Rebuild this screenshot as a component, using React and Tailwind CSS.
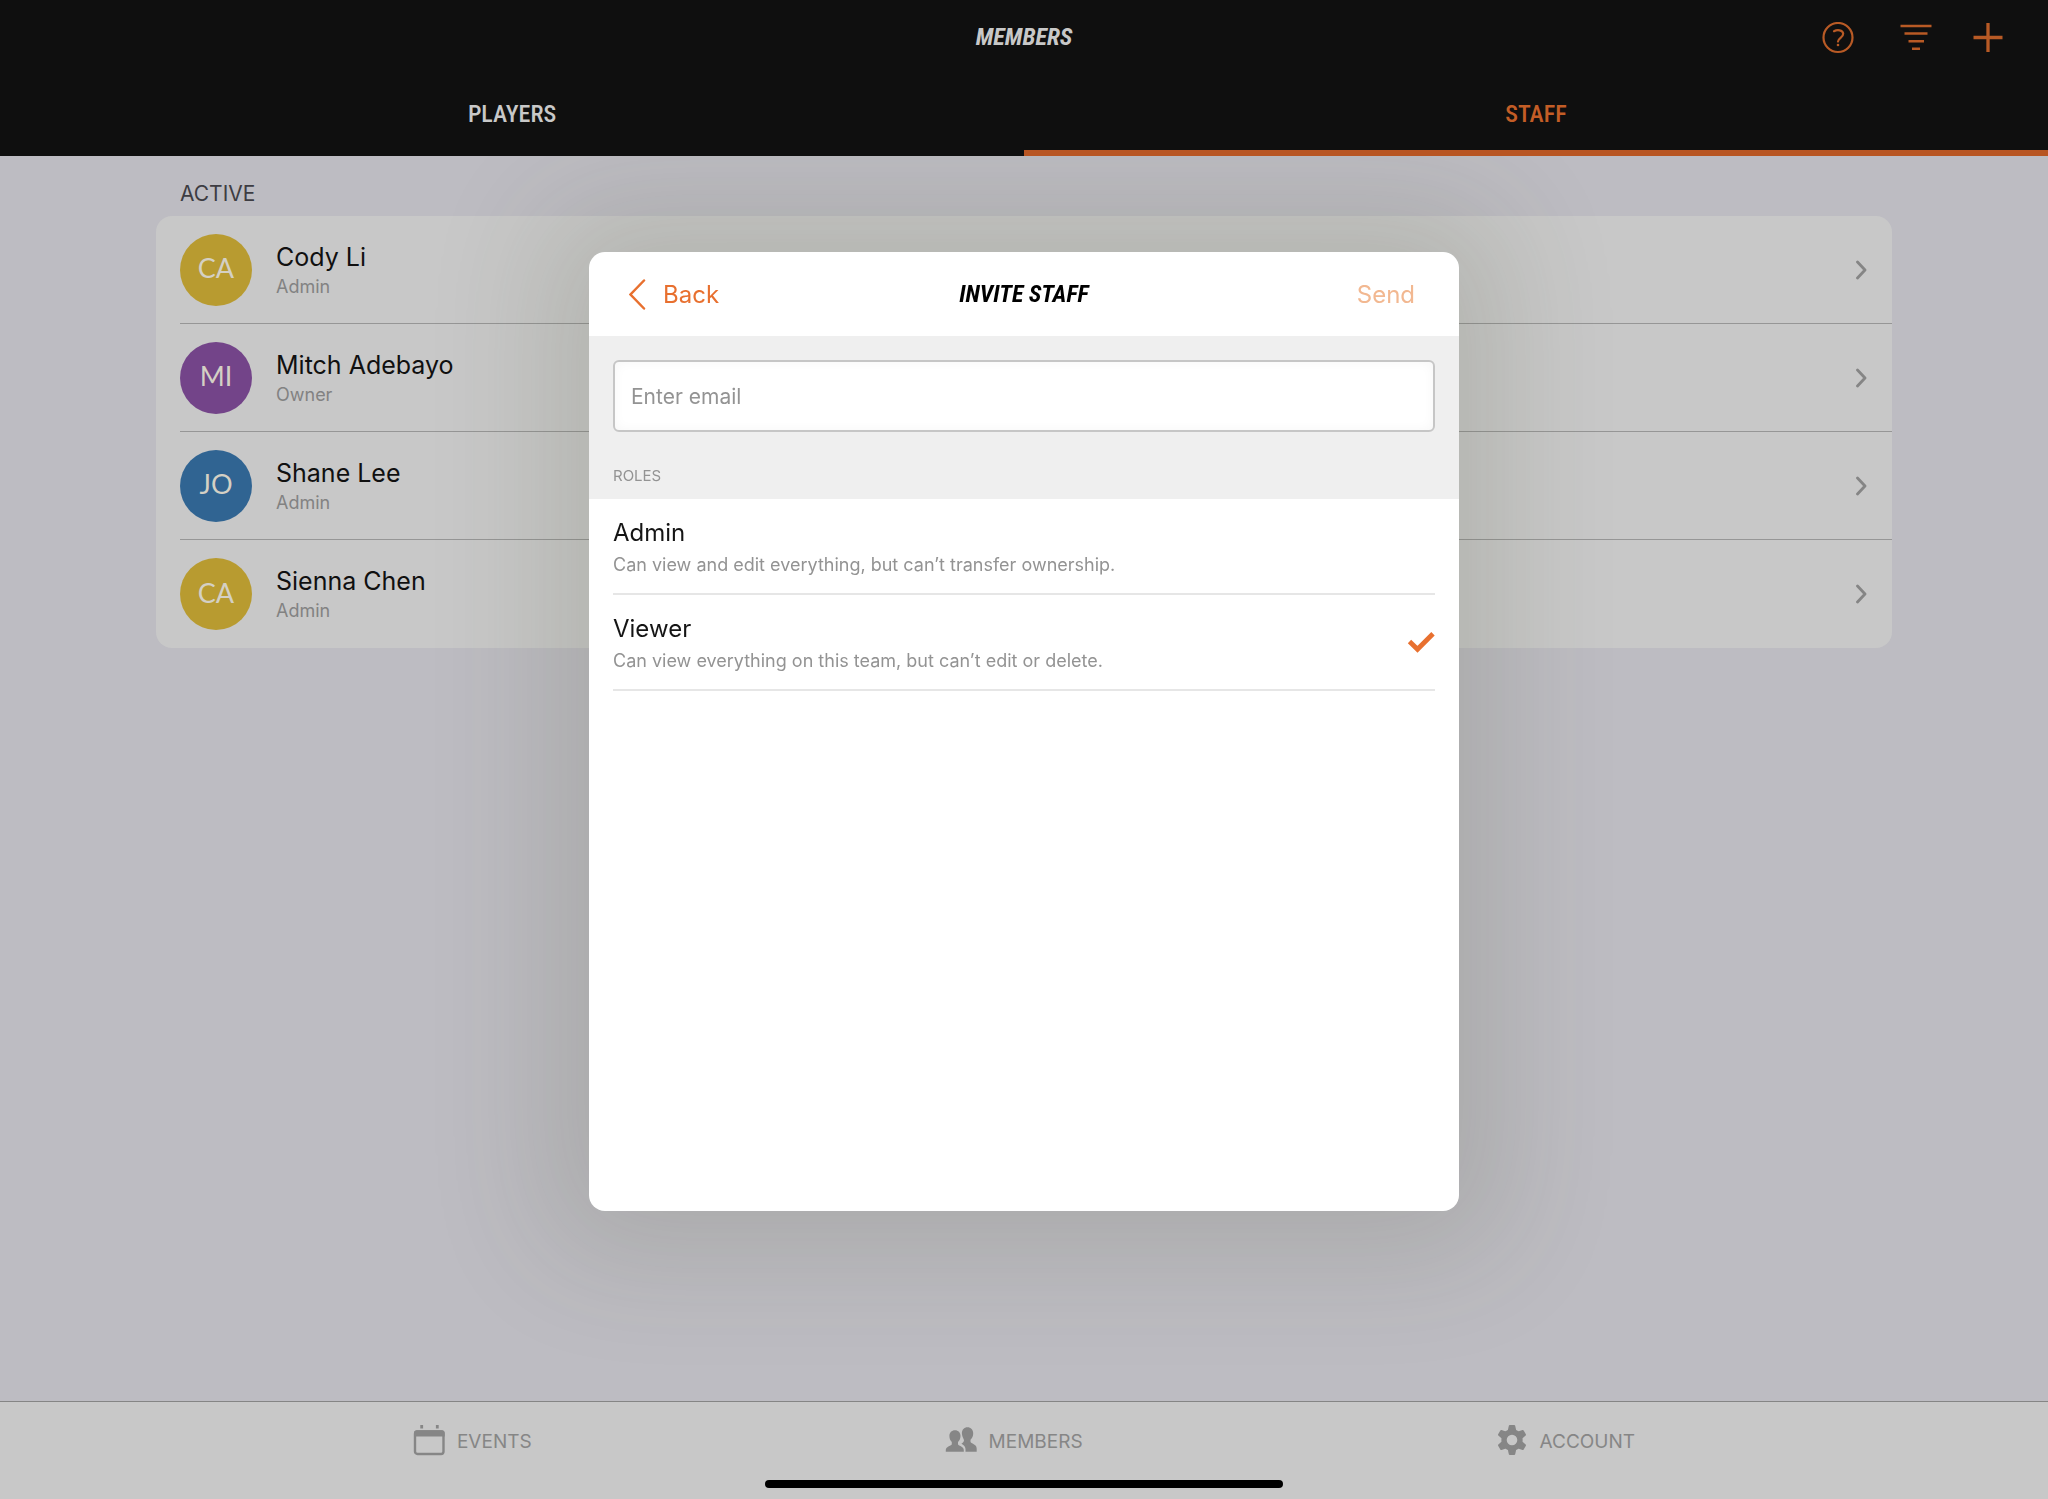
const members = [
  { initials: "CA", name: "Cody Li", role: "Admin", color: "bg-[#b89b30]" },
  { initials: "MI", name: "Mitch Adebayo", role: "Owner", color: "bg-[#734489]" },
  { initials: "JO", name: "Shane Lee", role: "Admin", color: "bg-[#306492]" },
  { initials: "CA", name: "Sienna Chen", role: "Admin", color: "bg-[#b89b30]" },
];

const roles = [
  { name: "Admin", text: "Can view and edit everything, but can’t transfer ownership." },
  { name: "Viewer", text: "Can view everything on this team, but can’t edit or delete." },
];

function HelpIcon() {
  return (
    <svg className="size-8" viewBox="0 0 32 32" fill="none" stroke="currentColor" strokeWidth="2.200" strokeLinecap="round">
      <circle cx="16" cy="15.500" r="14.500" />
      <path d="M12 9.200c3-1.700 8.800-1.500 9.200 2.400.3 4-5.200 4.200-5.200 8" />
      <circle cx="16" cy="23" r="1.300" fill="currentColor" stroke="none" />
    </svg>
  );
}

function FilterIcon() {
  return (
    <svg className="size-8" viewBox="0 0 32 32" fill="none" stroke="currentColor" strokeWidth="2.500">
      <path d="M.5 4h31M4.500 11.500h23M8.500 19.200h15.500M12 26.700h8" />
    </svg>
  );
}

function PlusIcon() {
  return (
    <svg className="size-8" viewBox="0 0 32 32" fill="none" stroke="currentColor" strokeWidth="3.300">
      <path d="M1.500 15.500h29M16 1v29" />
    </svg>
  );
}

function CalendarIcon() {
  return (
    <svg className="h-8 w-8" viewBox="0 0 32 32" fill="none">
      <rect x="2" y="6.500" width="28.500" height="22.500" rx="2.500" stroke="currentColor" strokeWidth="2.400" />
      <path d="M1 11.500V8a2.800 2.800 0 0 1 2.800-2.800h25A2.800 2.800 0 0 1 31.700 8v3.500z" fill="currentColor" />
      <path d="M8.700 0v3.500M24.300 0v3.500" stroke="currentColor" strokeWidth="2.800" />
    </svg>
  );
}

function MembersIcon() {
  return (
    <svg className="h-8 w-8" viewBox="0 0 32 32" fill="currentColor">
      <path d="M10 5.200c3.300 0 5.500 2.200 5.500 5.800 0 2.500-1 4.600-2.500 5.900v2.300c0 1.400 5.800 2 5.800 5.800v1.800H.8V25c0-3.800 6-4.400 6-5.800v-2.300c-1.500-1.300-2.400-3.400-2.400-5.900 0-3.600 2.300-5.800 5.600-5.800z" />
      <path d="M22.500 2.300c3.300 0 5.700 2.400 5.700 6.200 0 2.600-1.100 4.900-2.700 6.200v2.100c.4 1.900 6.200 2.200 6.200 6.900v3.100H20.500V24c0-3.300-2.800-4.400-4.100-5.300.7-.7 2.600-1.500 2.600-3.500 0-1.200-1.900-3-2.100-6.700 0-3.800 2.300-6.200 5.600-6.200z" />
    </svg>
  );
}

function GearIcon() {
  return (
    <svg className="h-8 w-8" viewBox="0 0 32 32" fill="currentColor" stroke="currentColor" strokeWidth="2" strokeLinejoin="round">
      <path
        fillRule="evenodd"
        d="M13.800 1h4.400l1 4.500 3.200 1.900 4.400-1.500 2.200 3.900-3.400 3v4.400l3.400 3-2.200 3.900-4.400-1.500-3.200 1.900-1 4.500h-4.400l-1-4.500-3.200-1.900-4.400 1.500-2.200-3.900 3.400-3v-4.400l-3.400-3 2.200-3.900 4.400 1.500 3.200-1.900zM16 8.700a6.300 6.300 0 1 0 0 12.600 6.300 6.300 0 1 0 0-12.600z"
      />
    </svg>
  );
}

function Chevron() {
  return (
    <svg className="h-5 w-3" viewBox="0 0 12 20" fill="none" stroke="currentColor" strokeWidth="2.800" strokeLinecap="round" strokeLinejoin="round">
      <path d="M1.500 2l7.500 8-7.500 8" />
    </svg>
  );
}

const tabs = [
  { label: "EVENTS", Icon: CalendarIcon },
  { label: "MEMBERS", Icon: MembersIcon },
  { label: "ACCOUNT", Icon: GearIcon },
];

export default function App() {
  return (
    <div className="flex min-h-screen flex-col bg-[#bdbcc2] font-['Inter',sans-serif]">
      <header className="relative z-20 bg-[#0f0f0f] font-['Roboto_Condensed','Roboto',sans-serif] text-[#c8c8c8]">
        <div className="grid h-[76px] grid-cols-[1fr_auto_1fr] items-center">
          <h1 className="col-start-2 pb-0.5 text-2xl font-bold italic">MEMBERS</h1>
          <div className="flex justify-end gap-10 pr-11 text-[#b85a25]">
            <button type="button" aria-label="Help" className="mr-1.5"><HelpIcon /></button>
            <button type="button" aria-label="Filter"><FilterIcon /></button>
            <button type="button" aria-label="Add member"><PlusIcon /></button>
          </div>
        </div>
        <div role="tablist" className="grid h-20 grid-cols-2 text-2xl font-medium">
          <button type="button" role="tab" aria-selected="false" className="border-b-6 border-transparent pt-0.5">PLAYERS</button>
          <button type="button" role="tab" aria-selected="true" className="border-b-6 border-[#b85522] pt-0.5 text-[#c35d26]">STAFF</button>
        </div>
      </header>

      <main className="flex-1 px-[156px]">
        <h2 className="px-6 pt-[22px] pb-1.5 text-[21px] leading-8 text-[#3d3c42]">ACTIVE</h2>
        <ul className="overflow-hidden rounded-2xl bg-[#c8c8c8] pl-6">
          {members.map((m) => (
            <li key={m.name} className="h-[108px] border-b border-[#969696] last:border-b-0">
              <button type="button" className="flex h-full w-full items-center gap-6 pr-6 text-left">
                <span className={`flex size-[72px] items-center justify-center rounded-full pb-0.5 font-['Lato',sans-serif] text-[27px] text-[#d4d0c4] ${m.color}`}>
                  {m.initials}
                </span>
                <span className="flex-1 pt-0.5">
                  <span className="block text-[25px] leading-8 text-[#101010]">{m.name}</span>
                  <span className="block text-lg leading-7 text-[#828282]">{m.role}</span>
                </span>
                <span className="text-[#858585]"><Chevron /></span>
              </button>
            </li>
          ))}
        </ul>
      </main>

      <footer className="relative z-20 flex flex-col border-t border-[#858585] bg-[#c8c8c8]">
        <nav className="flex h-[78px] items-center justify-evenly text-[19px] text-[#868686]">
          {tabs.map(({ label, Icon }) => (
            <a key={label} href={`#${label.toLowerCase()}`} className="flex items-center gap-3">
              <Icon />
              <span className="pt-0.5">{label}</span>
            </a>
          ))}
        </nav>
        <div className="mb-[11px] h-2 w-[518px] self-center rounded-full bg-black" />
      </footer>

      <div className="fixed inset-0 z-10 flex items-center justify-center pb-9">
        <section role="dialog" aria-label="Invite staff" className="h-[64vh] w-[870px] overflow-hidden rounded-2xl bg-white shadow-[0_0_120px_42px_rgba(60,64,36,0.15)]">
          <div className="grid h-[84px] grid-cols-[1fr_auto_1fr] items-center pt-0.5 text-2xl">
            <button type="button" className="flex items-center gap-4 justify-self-start pl-10 text-[#e8702f]">
              <svg className="h-8 w-[18px]" viewBox="0 0 18 32" fill="none" stroke="currentColor" strokeWidth="2.500" strokeLinecap="round">
                <path d="M15 1.500L1.500 15.500l13.500 14" />
              </svg>
              Back
            </button>
            <h2 className="pb-0.5 font-['Roboto_Condensed','Roboto',sans-serif] text-2xl font-bold text-black italic">INVITE STAFF</h2>
            <button type="button" disabled className="justify-self-end pr-11 text-[#f2b891]">Send</button>
          </div>
          <div className="bg-[#efefef] px-6 pt-6">
            <input
              type="email"
              aria-label="Email"
              placeholder="Enter email"
              className="h-[72px] w-full rounded-md border-2 border-[#c6c6c6] bg-white px-4 pt-0.5 text-[21px] shadow-[inset_0_0_12px_rgba(0,0,0,0.04)] outline-none placeholder:text-[#939393]"
            />
            <h3 className="pt-[33px] pb-3 text-[15px] leading-[22px] text-[#939393]">ROLES</h3>
          </div>
          <div role="radiogroup" aria-label="Roles" className="px-6">
            {roles.map((r) => (
              <label key={r.name} className="flex h-24 items-center justify-between border-b-2 border-[#e6e6e6]">
                <input type="radio" name="role" defaultChecked={r.name === "Viewer"} className="peer sr-only" />
                <span className="pt-1.5">
                  <span className="block text-2xl text-[#151515]">{r.name}</span>
                  <span className="block text-lg leading-8 text-[#939393]">{r.text}</span>
                </span>
                <svg className="hidden h-[22px] w-7 text-[#e8702f] peer-checked:block" viewBox="0 0 28 22" fill="none" stroke="currentColor" strokeWidth="4.800">
                  <path d="M2.500 10.500l8 7.800L26 2.800" />
                </svg>
              </label>
            ))}
          </div>
        </section>
      </div>
    </div>
  );
}
